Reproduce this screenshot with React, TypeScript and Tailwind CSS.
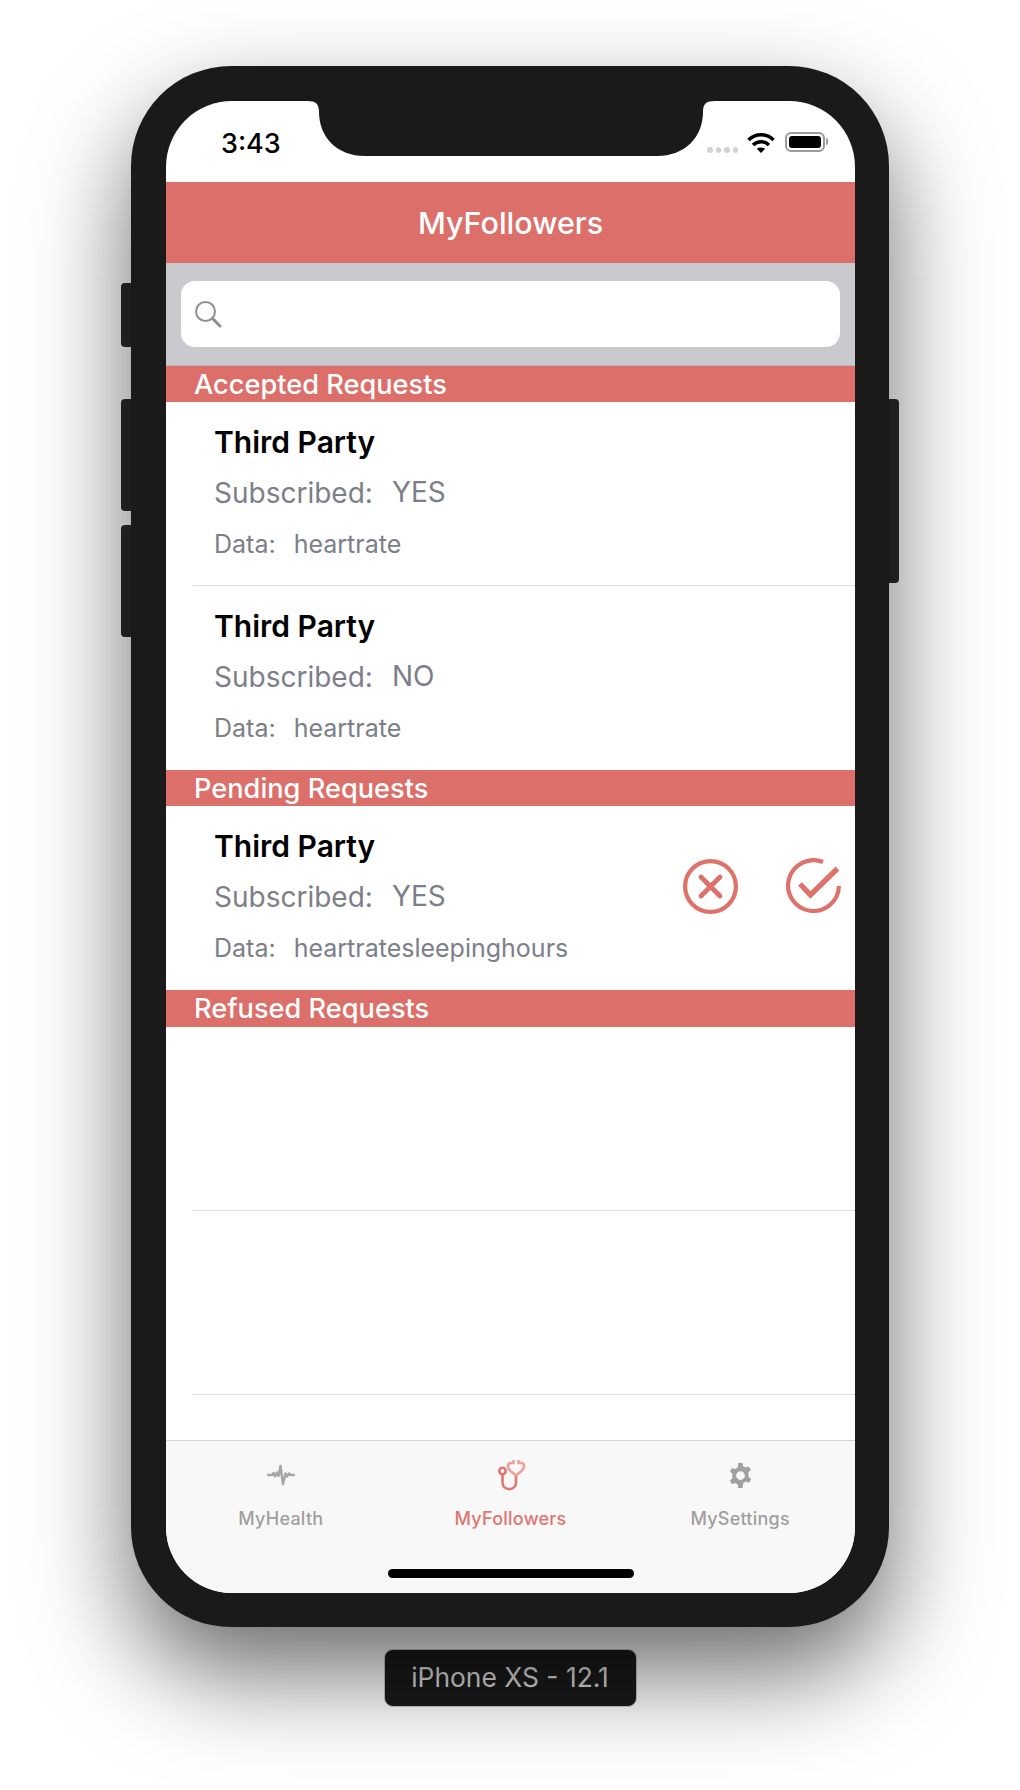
const coral = "#dc6f69";

function Row({ sub, data, actions, blank, short }: { sub?: string; data?: string; actions?: boolean; blank?: boolean; short?: boolean }) {
  return (
    <div className={`relative pl-[48px] ${short ? "h-[183px]" : "h-[184px]"}`}>
      {!blank && (
        <div className="flex flex-col">
          <div className="mt-[22px] h-[36px] text-[30px] leading-[36px] font-semibold text-black">Third Party</div>
          <div className="mt-[15px] flex h-[36px] items-center text-[28px] leading-[36px] text-[#7c7e89]">
            <span>Subscribed:</span>
            <span className="ml-[19px] -translate-y-[1px]">{sub}</span>
          </div>
          <div className="mt-[16px] flex h-[34px] items-center text-[25px] leading-[34px] text-[#7c7e89]">
            <span>Data:</span>
            <span className="ml-[18px]">{data}</span>
          </div>
        </div>
      )}
      {actions && (
        <div className="absolute right-[13px] top-[52px] flex gap-[46px]">
          <svg width="57" height="57" viewBox="0 0 57 57" fill="none" stroke="#df716b" strokeWidth="4.2" strokeLinecap="round">
            <circle cx="28.5" cy="28.5" r="25.4" />
            <path d="M19 19 L38 38 M38 19 L19 38" strokeWidth="4.8" />
          </svg>
          <svg width="57" height="57" viewBox="0 0 57 57" fill="none" stroke="#df716b" strokeWidth="4.2">
            <path d="M38 4 A25.4 25.4 0 1 0 53.9 28" />
            <path d="M15 26 L25.5 37 L52.5 10.5" strokeWidth="5.4" />
          </svg>
        </div>
      )}
    </div>
  );
}

function Section({ title, tall }: { title: string; tall?: boolean }) {
  return (
    <div className={`bg-[#dc6f69] pl-[28px] text-[27.2px] leading-[37px] font-medium text-white ${tall ? "h-[37px]" : "h-[36px]"}`}>{title}</div>
  );
}

function Divider() {
  return <div className="ml-[27px] h-px bg-[#dedee0]" />;
}

function SideBtn({ h, mt }: { h: number; mt: number }) {
  return <div className="w-[11px] rounded-l-[4px] bg-[#2a2a2a]" style={{ height: h, marginTop: mt }} />;
}

function Tab({ label, active, children }: { label: string; active?: boolean; children: React.ReactNode }) {
  return (
    <div className="flex flex-1 flex-col items-center">
      <div className="flex h-[36px] w-[36px] items-center justify-center">{children}</div>
      <div className={`mt-[14px] text-[18px] leading-[24px] font-medium tracking-[0.25px] ${active ? "text-[#e0756f]" : "text-[#9f9f9f]"}`}>{label}</div>
    </div>
  );
}

export default function App() {
  return (
    <div className="relative h-[1790px] w-[1020px] overflow-hidden bg-white pt-[66px] font-['Inter',sans-serif]">
      <div className="relative mx-auto h-[1561px] w-[758px]">
        <div className="absolute -left-[10px] top-0 flex flex-col">
          <SideBtn h={64} mt={217} />
          <SideBtn h={112} mt={52} />
          <SideBtn h={112} mt={14} />
        </div>
        <div className="absolute -right-[10px] top-[333px] h-[184px] w-[11px] rounded-r-[4px] bg-[#2a2a2a]" />
        <div className="relative h-full w-full rounded-[100px] bg-[#1a1a1a] pt-[35px] pl-[35px] shadow-[0_46px_100px_rgba(0,0,0,0.58)]">
          <div className="relative flex h-[1492px] w-[689px] flex-col overflow-hidden rounded-[66px] bg-white">
            {/* notch */}
            <svg className="absolute left-[141px] top-0" width="408" height="55" viewBox="0 0 408 55" fill="#1a1a1a">
              <path d="M0 0 H408 C399 0 396 3 396 11 C396 36 378 55 350 55 H58 C30 55 12 36 12 11 C12 3 9 0 0 0 Z" />
            </svg>
            {/* status bar */}
            <div className="flex h-[81px] shrink-0 items-start">
              <div className="ml-[55px] mt-[25px] text-[27px] leading-[36px] font-medium text-black">3:43</div>
              <div className="ml-auto mr-[27px] mt-[31px] flex items-start">
                <div className="mt-[15px] flex gap-[3px]">
                  <span className="h-[5.5px] w-[5.5px] rounded-full bg-[#d2d2d2]" />
                  <span className="h-[5.5px] w-[5.5px] rounded-full bg-[#d2d2d2]" />
                  <span className="h-[5.5px] w-[5.5px] rounded-full bg-[#d2d2d2]" />
                  <span className="h-[5.5px] w-[5.5px] rounded-full bg-[#d2d2d2]" />
                </div>
                <svg className="ml-[9px]" width="28" height="22" viewBox="0 0 28 22" fill="none" stroke="#000" strokeWidth="3.4">
                  <path d="M1.5 8 C8.5 1 19.5 1 26.5 8" />
                  <path d="M6 13 C10.5 8.6 17.5 8.6 22 13" />
                  <path d="M14 21 L9.8 16.8 C12 15 16 15 18.2 16.8 Z" fill="#000" stroke="none" />
                </svg>
                <div className="ml-[10px] h-[20px] w-[40px] rounded-[6px] border-2 border-[#9a9a9a] p-[2px]">
                  <div className="h-full w-full rounded-[3px] bg-black" />
                </div>
                <div className="ml-[1px] mt-[6px] h-[7px] w-[2px] rounded-r-[2px] bg-[#9a9a9a]" />
              </div>
            </div>
            {/* nav */}
            <div className="flex h-[81px] shrink-0 items-center justify-center bg-[#dc6f69] text-[30.5px] font-medium text-white">MyFollowers</div>
            {/* search */}
            <div className="h-[103px] shrink-0 border-b border-[#b9b9bd] bg-[#c9c9ce] px-[15px] pt-[18px]">
              <div className="flex h-[66px] items-center rounded-[14px] bg-white pl-[13px]">
                <svg width="28" height="28" viewBox="0 0 28 28" fill="none" stroke="#8e8e93" strokeWidth="2">
                  <circle cx="11.5" cy="11.5" r="9.5" />
                  <path d="M18.5 18.5 L26 26" strokeWidth="3" strokeLinecap="round" />
                </svg>
              </div>
            </div>
            {/* list */}
            <div className="flex flex-1 flex-col overflow-hidden" style={{ color: coral }}>
              <Section title="Accepted Requests" />
              <Row sub="YES" data="heartrate" short />
              <Divider />
              <Row sub="NO" data="heartrate" />
              <Section title="Pending Requests" />
              <Row sub="YES" data="heartratesleepinghours" actions />
              <Section title="Refused Requests" tall />
              <Row blank short />
              <Divider />
              <Row blank short />
              <Divider />
            </div>
            {/* tab bar */}
            <div className="relative flex h-[153px] shrink-0 border-t border-[#d3d3d5] bg-[#f8f8f8] pt-[16px]">
              <Tab label="MyHealth">
                <svg width="28" height="22" viewBox="0 0 28 22" fill="none" stroke="#a5a5a5" strokeWidth="2.4" strokeLinejoin="round" strokeLinecap="round">
                  <path d="M1 11 H5 L6.5 9 L8 12.5 L10 8.5 L11.5 12 L13.5 2 L16 20 L18.5 9.5 L20 12.5 L22 9.5 L23.5 11 H27" />
                </svg>
              </Tab>
              <Tab label="MyFollowers" active>
                <svg width="30" height="34" viewBox="0 0 30 34" fill="none" stroke="#e0756f" strokeWidth="2.6" strokeLinecap="round" strokeLinejoin="round">
                  <circle cx="6.5" cy="13" r="3.2" />
                  <path d="M6.5 17 V24 C6.5 33.5 20 33.5 20 24 V18" />
                  <path d="M17.5 3 V5 H15 C11 5 11 10 14.5 13 L20 17.5 L25.5 13 C29 10 29 5 25 5 H22.5 V3" stroke="#eda09b" />
                </svg>
              </Tab>
              <Tab label="MySettings">
                <svg width="25" height="25" viewBox="0 0 24 24" fill="#a0a0a0">
                  <path fillRule="evenodd" d="M10 0 H14 L14.6 3.2 C15.4 3.5 16.2 3.9 16.9 4.4 L20 3.3 L22 6.7 L19.5 8.8 C19.7 9.6 19.8 10.4 19.8 11.2 C19.8 11.9 19.7 12.7 19.6 13.3 L22.2 15.4 L20.2 18.9 L17.1 17.8 C16.4 18.4 15.6 18.9 14.7 19.2 L14 24 H10 L9.3 20.6 C8.4 20.3 7.6 19.8 6.9 19.2 L3.8 20.3 L1.8 16.9 L4.3 14.7 C4.2 14 4.1 13.2 4.1 12.5 C4.1 11.8 4.2 11 4.3 10.2 L1.8 8.1 L3.8 4.7 L6.9 5.8 C7.6 5.2 8.4 4.7 9.3 4.4 Z M12 7.8 A4.2 4.2 0 1 0 12 16.2 A4.2 4.2 0 1 0 12 7.8 Z" />
                </svg>
              </Tab>
              <div className="absolute bottom-[15px] left-[222px] h-[9px] w-[246px] rounded-full bg-black" />
            </div>
          </div>
        </div>
      </div>
      {/* device label */}
      <div className="mx-auto mt-[22px] flex h-[58px] w-[253px] items-center justify-center rounded-[9px] border border-[#c8c8c8] bg-[#1a1a1a] text-[26.4px] text-[#dcdcdc]">
        iPhone XS - 12.1
      </div>
    </div>
  );
}
